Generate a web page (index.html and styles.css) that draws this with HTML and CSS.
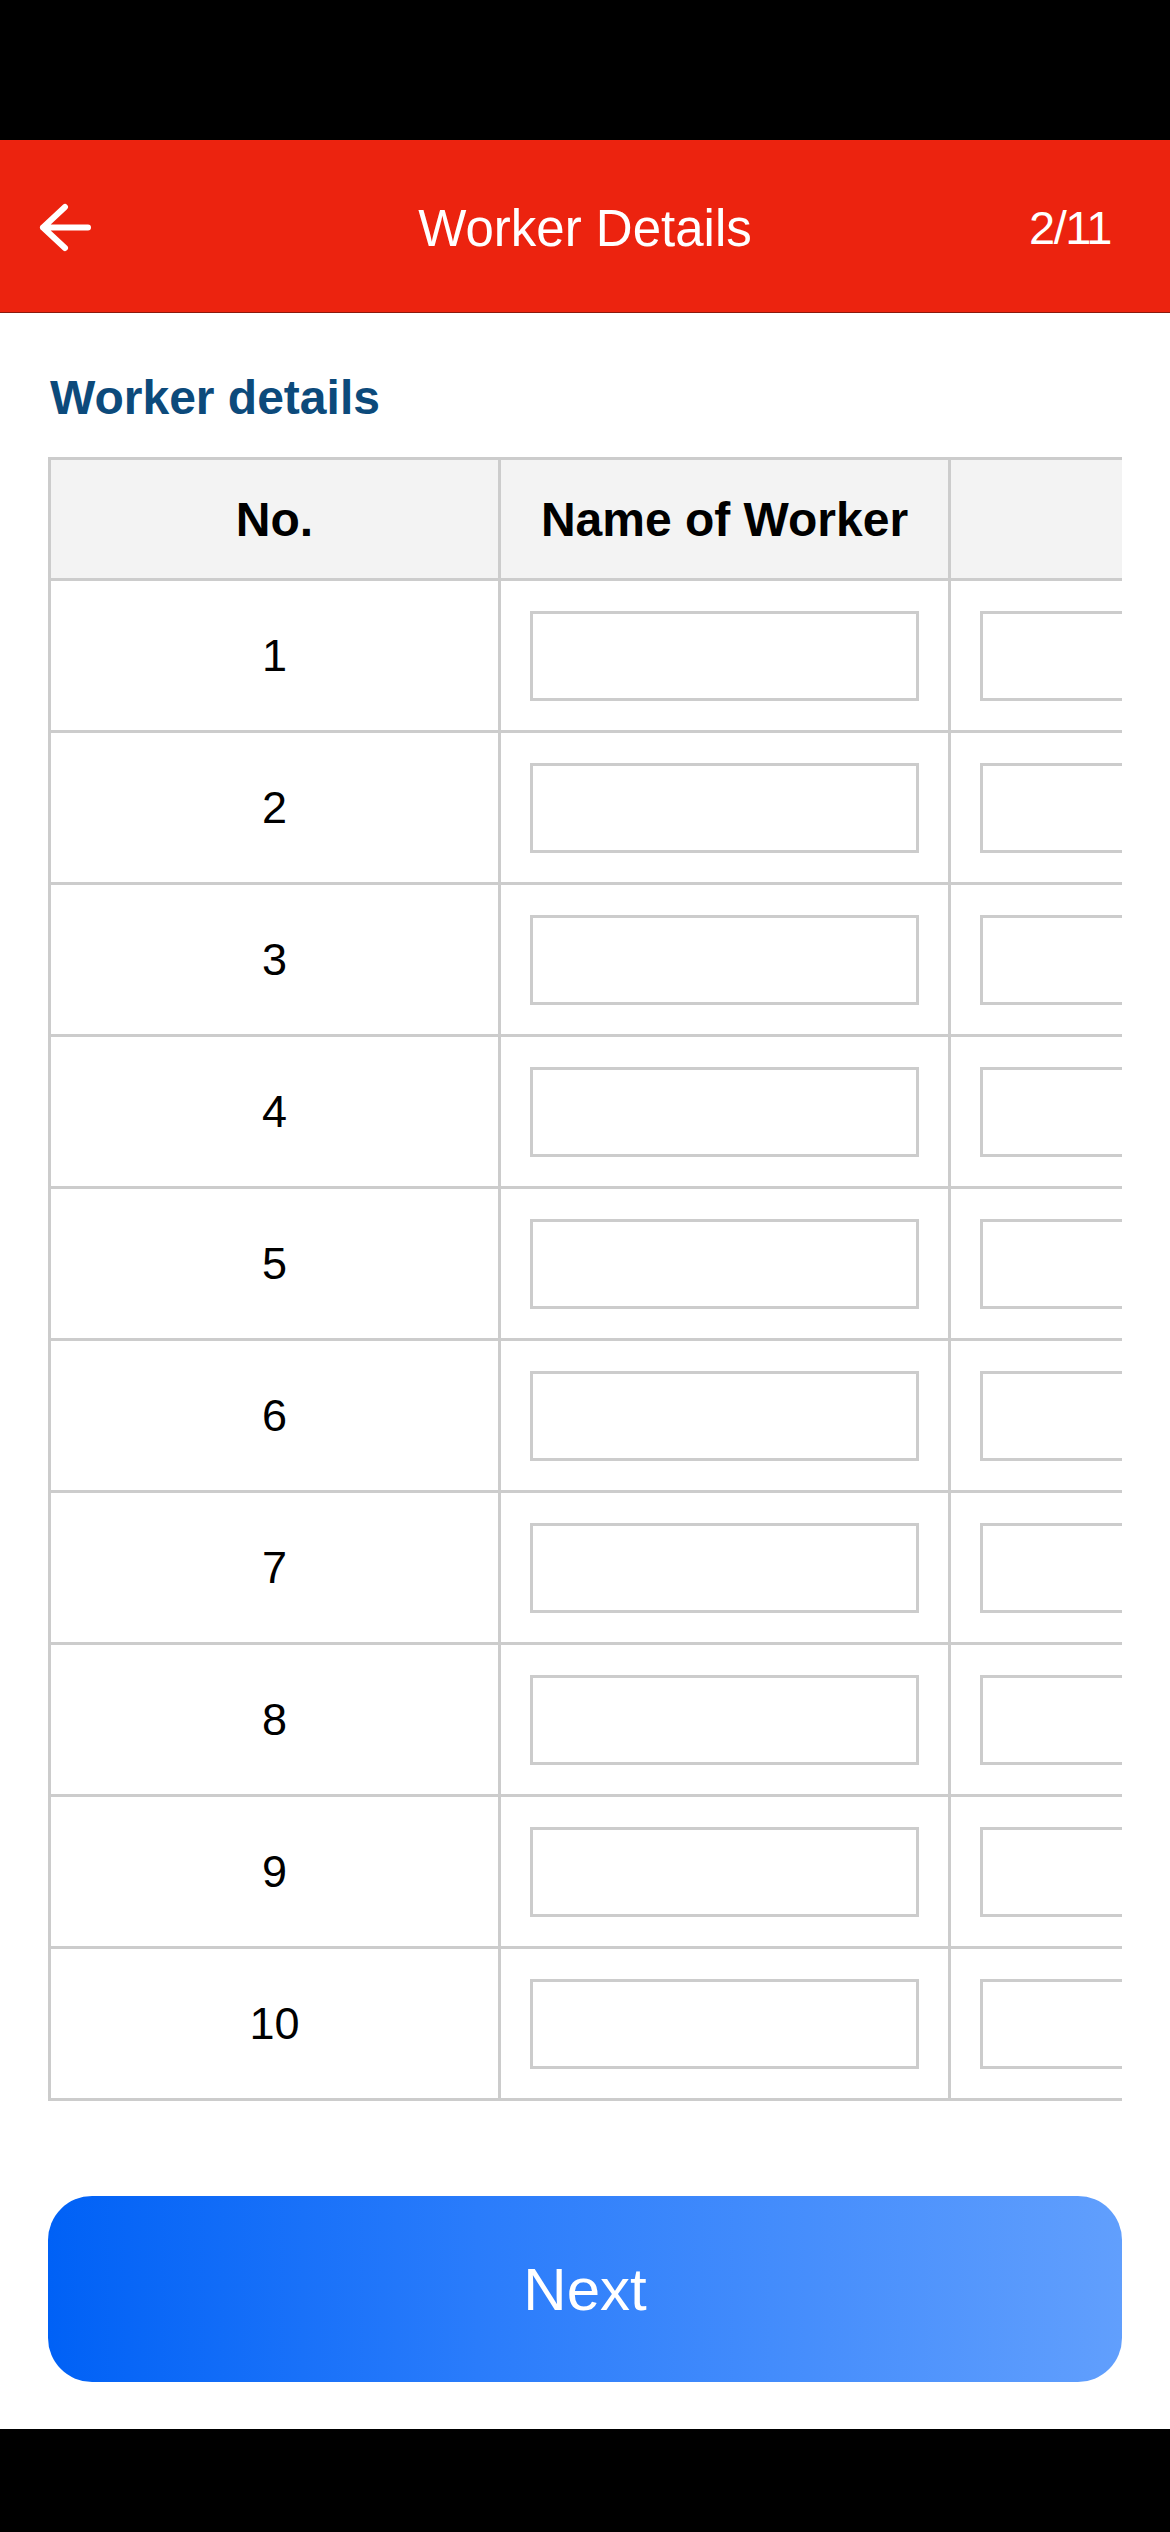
FILE: index.html
```html
<!DOCTYPE html>
<html lang="en">
<head>
<meta charset="utf-8">
<title>Worker Details</title>
<link rel="stylesheet" href="styles.css">
</head>
<body>
<div class="screen">
  <div class="status-bar"></div>
  <header class="nav">
    <div class="nav-left">
      <svg class="back" viewBox="0 0 54 50" width="54" height="50" aria-label="Back">
        <path d="M5 25.5 H50 M27 5 L5 25.5 L27 46" fill="none" stroke="#fff" stroke-width="6" stroke-linecap="round" stroke-linejoin="round"/>
      </svg>
    </div>
    <div class="nav-title">Worker Details</div>
    <div class="nav-right">2/11</div>
  </header>
  <main class="content">
    <h2 class="section-title">Worker details</h2>
    <div class="table-wrap">
      <table class="grid">
        <thead>
          <tr><th>No.</th><th>Name of Worker</th><th></th></tr>
        </thead>
        <tbody>
          <tr><td>1</td><td><input class="cell-input" type="text"></td><td><input class="cell-input" type="text"></td></tr>
          <tr><td>2</td><td><input class="cell-input" type="text"></td><td><input class="cell-input" type="text"></td></tr>
          <tr><td>3</td><td><input class="cell-input" type="text"></td><td><input class="cell-input" type="text"></td></tr>
          <tr><td>4</td><td><input class="cell-input" type="text"></td><td><input class="cell-input" type="text"></td></tr>
          <tr><td>5</td><td><input class="cell-input" type="text"></td><td><input class="cell-input" type="text"></td></tr>
          <tr><td>6</td><td><input class="cell-input" type="text"></td><td><input class="cell-input" type="text"></td></tr>
          <tr><td>7</td><td><input class="cell-input" type="text"></td><td><input class="cell-input" type="text"></td></tr>
          <tr><td>8</td><td><input class="cell-input" type="text"></td><td><input class="cell-input" type="text"></td></tr>
          <tr><td>9</td><td><input class="cell-input" type="text"></td><td><input class="cell-input" type="text"></td></tr>
          <tr><td>10</td><td><input class="cell-input" type="text"></td><td><input class="cell-input" type="text"></td></tr>
        </tbody>
      </table>
    </div>
    <button class="next-btn" type="button">Next</button>
  </main>
  <div class="home-bar"></div>
</div>
</body>
</html>
```
FILE: styles.css
```css
html, body {
  margin: 0;
  padding: 0;
  background: #fff;
}
body {
  font-family: "Liberation Sans", Arial, sans-serif;
  color: #000;
}
.screen {
  width: 1170px;
  height: 2532px;
  display: flex;
  flex-direction: column;
  overflow: hidden;
}
.status-bar {
  height: 140px;
  background: #000;
  flex: none;
}
.nav {
  flex: none;
  height: 172px;
  background: #ec230f;
  border-bottom: 1px solid #8a1a0e;
  display: grid;
  grid-template-columns: 1fr auto 1fr;
  align-items: center;
  padding: 0 64px;
  color: #fff;
}
.nav-left {
  display: flex;
  align-items: center;
}
.back {
  display: block;
  margin-top: 2px;
  margin-left: -26px;
}
.nav-title {
  font-size: 51px;
  line-height: 60px;
  padding-top: 5px;
}
.nav-right {
  justify-self: end;
  font-size: 47px;
  letter-spacing: -1.5px;
  line-height: 60px;
  padding-top: 4px;
  margin-right: -5px;
}
.content {
  flex: 1;
  padding: 0 48px;
  display: flex;
  flex-direction: column;
}
.section-title {
  margin: 57px 0 0 2px;
  font-size: 48px;
  line-height: 56px;
  font-weight: bold;
  color: #0c4a7b;
}
.table-wrap {
  margin-top: 31px;
  overflow: hidden;
  width: 1074px;
}
.grid {
  border-collapse: separate;
  border-spacing: 0;
  table-layout: fixed;
  width: 1353px;
  border-top: 3px solid #cccccc;
  border-left: 3px solid #cccccc;
}
.grid th, .grid td {
  box-sizing: border-box;
  width: 450px;
  padding: 0 29px;
  border-right: 3px solid #cccccc;
  border-bottom: 3px solid #cccccc;
  text-align: center;
  vertical-align: middle;
}
.grid th {
  height: 121px;
  background: #f3f3f3;
  font-size: 48px;
  font-weight: bold;
}
.grid td {
  height: 152px;
  font-size: 45px;
  font-weight: normal;
}
.cell-input {
  display: block;
  box-sizing: border-box;
  width: 100%;
  height: 90px;
  margin: 0;
  padding: 0 12px;
  border: 3px solid #cccccc;
  border-radius: 0;
  background: #fff;
  font-family: inherit;
  font-size: 40px;
  outline: none;
}
.next-btn {
  margin-top: 95px;
  height: 186px;
  width: 100%;
  border: none;
  border-radius: 44px;
  background: linear-gradient(90deg, #0061f6 0%, #2a7cfb 40%, #619ffd 100%);
  color: #fff;
  font-family: "Liberation Sans", Arial, sans-serif;
  font-size: 60px;
  padding: 0;
}
.home-bar {
  flex: none;
  height: 103px;
  background: #000;
}
```
